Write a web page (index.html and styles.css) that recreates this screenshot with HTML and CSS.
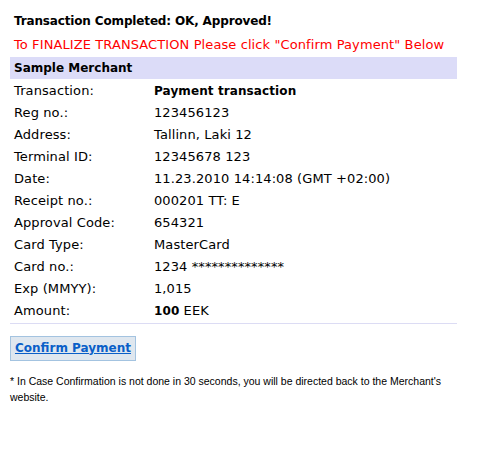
FILE: index.html
```html
<!DOCTYPE html>
<html lang="en">
<head>
  <meta charset="UTF-8" />
  <title>Transaction Completed</title>
  <link rel="stylesheet" href="styles.css">
</head>
<body>
  <div class="receipt">
    <h1 class="status">Transaction Completed: OK, Approved!</h1>
    <p class="notice">To FINALIZE TRANSACTION Please click "Confirm Payment" Below</p>

    <table class="details">
      <tr class="merchant">
        <th colspan="2">Sample Merchant</th>
      </tr>
      <tr><td class="label">Transaction:</td><td><b class="strong">Payment transaction</b></td></tr>
      <tr><td class="label">Reg no.:</td><td>123456123</td></tr>
      <tr><td class="label">Address:</td><td>Tallinn, Laki 12</td></tr>
      <tr><td class="label">Terminal ID:</td><td>12345678 123</td></tr>
      <tr><td class="label">Date:</td><td>11.23.2010 14:14:08 (GMT +02:00)</td></tr>
      <tr><td class="label">Receipt no.:</td><td>000201 TT: E</td></tr>
      <tr><td class="label">Approval Code:</td><td>654321</td></tr>
      <tr><td class="label">Card Type:</td><td>MasterCard</td></tr>
      <tr><td class="label">Card no.:</td><td>1234 **************</td></tr>
      <tr><td class="label">Exp (MMYY):</td><td>1,015</td></tr>
      <tr><td class="label">Amount:</td><td><b class="strong">100</b> EEK</td></tr>
    </table>

    <div class="actions">
      <a href="#" class="confirm">Confirm Payment</a>
    </div>

    <p class="footnote">* In Case Confirmation is not done in 30 seconds, you will be directed back to the Merchant's website.</p>
  </div>
</body>
</html>
```

FILE: styles.css
```css
* {
  box-sizing: border-box;
  margin: 0;
  padding: 0;
}

body {
  background: #fff;
  color: #000;
  font-family: 'DejaVu Sans', Verdana, sans-serif;
  font-size: 13px;
}

.receipt {
  width: 447px;
  margin: 11px 0 0 10px;
}

.status {
  font-size: 12px;
  font-weight: bold;
  letter-spacing: -0.15px;
  line-height: 20px;
  padding-left: 4px;
}

.notice {
  color: #ff0000;
  letter-spacing: 0.1px;
  line-height: 20px;
  padding: 4px 0 2px 4px;
}

.details {
  width: 100%;
  border-collapse: collapse;
  border-bottom: 1px solid #dcdcf4;
}

.details th {
  background: #dcdcf8;
  font-size: 12px;
  text-align: left;
  height: 22px;
  padding: 0 4px;
}

.details td {
  height: 22px;
  padding: 1px 4px 0;
  letter-spacing: 0.1px;
}

.details tr:last-child td {
  height: 24px;
  padding-bottom: 2px;
}

.details .label {
  width: 140px;
}

.strong {
  font-size: 12px;
}

.actions {
  margin-top: 12px;
}

.confirm {
  display: inline-block;
  width: 126px;
  height: 25px;
  line-height: 23px;
  text-align: center;
  background: #dfe7ef;
  border: 1px solid #a3c3e0;
  color: #0a5fc8;
  font-size: 12px;
  font-weight: bold;
}

.footnote {
  font-family: 'Liberation Sans', Arial, sans-serif;
  font-size: 10.5px;
  line-height: 16px;
  margin-top: 12px;
}
```
